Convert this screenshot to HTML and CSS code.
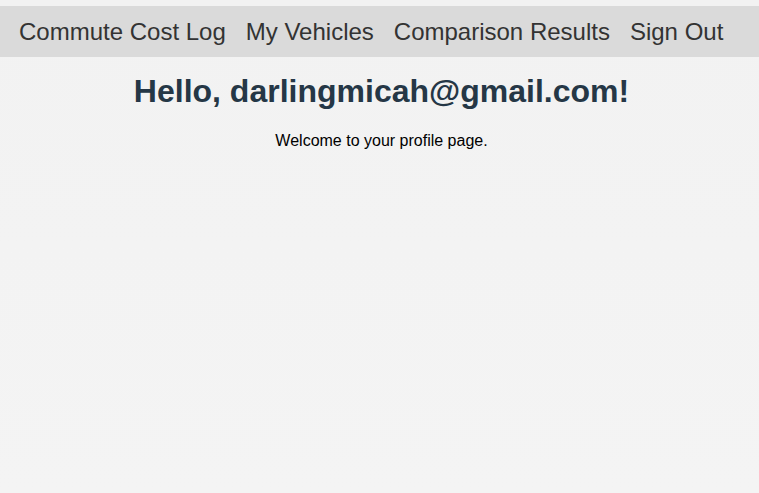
FILE: index.html
```html
<!DOCTYPE html>
<html lang="en">
<head>
<meta charset="utf-8">
<title>Profile</title>
<link rel="stylesheet" href="styles.css">
</head>
<body>
<nav class="topnav">
  <a class="nav-link" href="#">Commute Cost Log</a>
  <a class="nav-link" href="#">My Vehicles</a>
  <a class="nav-link" href="#">Comparison Results</a>
  <a class="nav-link" href="#">Sign Out</a>
</nav>
<main class="profile">
  <h1 class="greeting">Hello, darlingmicah@gmail.com!</h1>
  <p class="welcome">Welcome to your profile page.</p>
</main>
</body>
</html>
```

FILE: styles.css
```css
html, body {
  margin: 0;
  padding: 0;
}
body {
  min-height: 100vh;
  background: linear-gradient(#f2f2f2, #f4f4f4);
  font-family: "Liberation Sans", Arial, sans-serif;
  padding-top: 6px;
  box-sizing: border-box;
}
.topnav {
  display: flex;
  align-items: center;
  gap: 20px;
  height: 51px;
  padding-left: 19px;
  background: #dadada;
}
.nav-link {
  font-size: 24px;
  color: #333333;
  text-decoration: none;
  line-height: 1;
  padding-top: 1px;
}
.profile {
  text-align: center;
  padding-left: 4px;
}
.greeting {
  margin: 16px 0 0;
  font-size: 32px;
  font-weight: bold;
  color: #253746;
}
.welcome {
  margin: 22px 0 0;
  font-size: 16px;
  color: #000;
}
```
